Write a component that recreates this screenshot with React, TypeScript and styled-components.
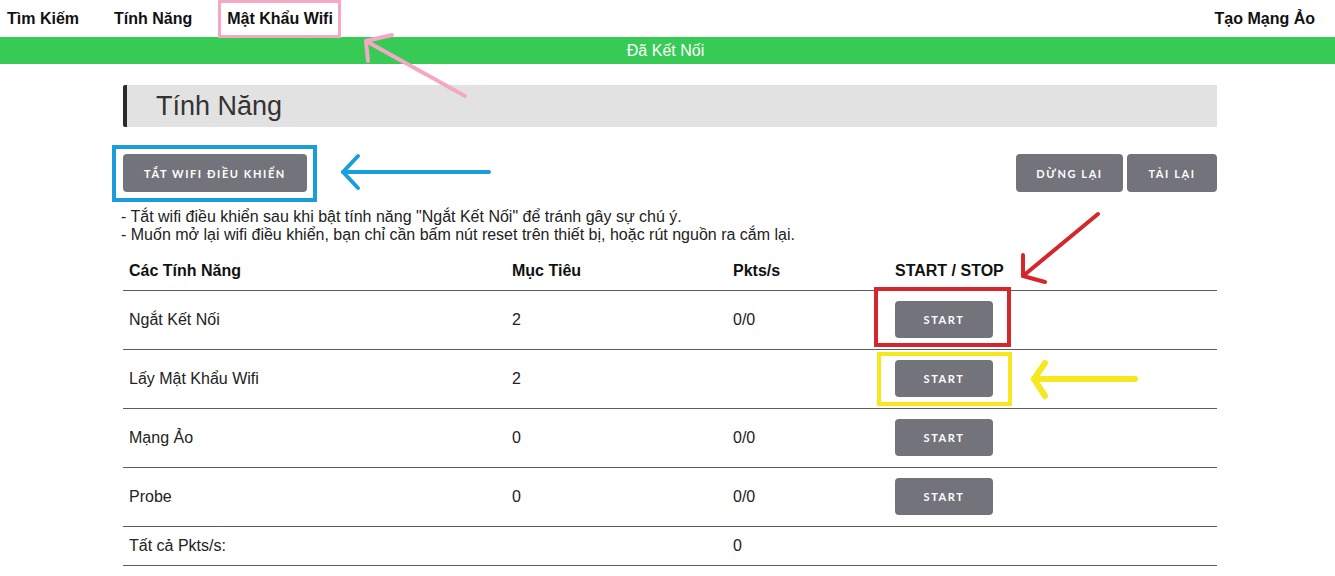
import React from "react";
import styled, { createGlobalStyle } from "styled-components";

const Global = createGlobalStyle`
  html, body { margin: 0; padding: 0; background: #fff; }
  body { font-family: "Liberation Sans", Arial, sans-serif; color: #222; }
`;

const Page = styled.div`
  position: relative;
  width: 1335px;
  min-height: 576px;
  overflow: hidden;
`;

const Nav = styled.nav`
  display: flex;
  align-items: center;
  height: 37px;
  padding: 0 20px 0 7px;
  gap: 35px;
`;

const NavLink = styled.a<{ $highlight?: boolean; $right?: boolean }>`
  position: relative;
  font-size: 16px;
  font-weight: 700;
  color: #111;
  text-decoration: none;
  margin-left: ${(p) => (p.$right ? "auto" : "0")};
  line-height: 37px;
  &::after {
    content: "";
    display: ${(p) => (p.$highlight ? "block" : "none")};
    position: absolute;
    top: 0;
    bottom: -1px;
    left: -9px;
    right: -8px;
    border: 3px solid #f4a8c5;
  }
`;

const StatusBar = styled.div`
  height: 27px;
  background: #37cb55;
  color: #fff;
  font-size: 16px;
  display: flex;
  align-items: center;
  justify-content: center;
  padding-right: 4px;
`;

const Content = styled.main`
  width: 1094px;
  margin-left: 123px;
  padding-top: 21px;
`;

const SectionTitle = styled.h2`
  margin: 0;
  height: 42px;
  background: #e2e2e2;
  border-left: 4px solid #2b2b2b;
  border-radius: 2px 0 0 2px;
  display: flex;
  align-items: center;
  padding-left: 29px;
  font-weight: 400;
  font-size: 27px;
  color: #333;
  font-family: "Liberation Sans", Arial, sans-serif;
`;

const Toolbar = styled.div`
  display: flex;
  align-items: center;
  margin-top: 27px;
  gap: 4px;
`;

const Spacer = styled.div`
  flex: 1;
`;

const Button = styled.button<{ $w: number; $h?: number; $box?: string }>`
  position: relative;
  width: ${(p) => p.$w}px;
  height: ${(p) => p.$h ?? 38}px;
  border: none;
  border-radius: 4px;
  background: #72737b;
  color: #fff;
  font-family: Lato, "Open Sans", sans-serif;
  font-weight: 700;
  font-size: 11px;
  letter-spacing: 1.6px;
  padding: 0;
  cursor: pointer;
  &::after {
    content: "";
    display: ${(p) => (p.$box ? "block" : "none")};
    position: absolute;
    border: 4px solid ${(p) => p.$box ?? "transparent"};
    pointer-events: none;
  }
`;

const BlueBoxButton = styled(Button)`
  &::after {
    top: -9px;
    bottom: -10px;
    left: -11px;
    right: -10px;
  }
`;

const RedBoxButton = styled(Button)`
  &::after {
    top: -14px;
    bottom: -9px;
    left: -21px;
    right: -18px;
  }
`;

const YellowBoxButton = styled(Button)`
  &::after {
    top: -8px;
    bottom: -9px;
    left: -18px;
    right: -19px;
  }
`;

const Notes = styled.div`
  margin-top: 16px;
  margin-left: -2px;
  font-size: 16px;
  line-height: 18px;
  color: #222;
`;

const Table = styled.table`
  width: 100%;
  margin-top: 9px;
  border-collapse: collapse;
  table-layout: fixed;
  font-size: 16px;
  color: #222;
`;

const Th = styled.th<{ $w?: number }>`
  text-align: left;
  font-weight: 700;
  height: 37px;
  padding: 0 6px;
  border-bottom: 1px solid #5c5c5c;
  width: ${(p) => (p.$w ? `${p.$w}px` : "auto")};
  box-sizing: border-box;
  color: #111;
  vertical-align: middle;
`;

const Td = styled.td<{ $tall?: boolean }>`
  height: ${(p) => (p.$tall ? 58 : 38)}px;
  padding: 0 6px;
  border-bottom: 1px solid #5c5c5c;
  vertical-align: middle;
`;

const StartCell = styled(Td)`
  padding-left: 6px;
`;

const Overlay = styled.svg`
  position: absolute;
  left: 0;
  top: 0;
  width: 1335px;
  height: 576px;
  pointer-events: none;
`;

type Row = {
  name: string;
  target: string;
  pkts: string;
  box?: "red" | "yellow";
};

const rows: Row[] = [
  { name: "Ngắt Kết Nối", target: "2", pkts: "0/0", box: "red" },
  { name: "Lấy Mật Khẩu Wifi", target: "2", pkts: "", box: "yellow" },
  { name: "Mạng Ảo", target: "0", pkts: "0/0" },
  { name: "Probe", target: "0", pkts: "0/0" },
];

const StartButton: React.FC<{ box?: "red" | "yellow" }> = ({ box }) => {
  if (box === "red")
    return (
      <RedBoxButton $w={98} $h={37} $box="#d5262c">
        START
      </RedBoxButton>
    );
  if (box === "yellow")
    return (
      <YellowBoxButton $w={98} $h={37} $box="#f6e81f">
        START
      </YellowBoxButton>
    );
  return (
    <Button $w={98} $h={37}>
      START
    </Button>
  );
};

export default function App() {
  return (
    <Page>
      <Global />
      <Nav>
        <NavLink>Tìm Kiếm</NavLink>
        <NavLink>Tính Năng</NavLink>
        <NavLink $highlight>Mật Khẩu Wifi</NavLink>
        <NavLink $right>Tạo Mạng Ảo</NavLink>
      </Nav>
      <StatusBar>Đã Kết Nối</StatusBar>
      <Content>
        <SectionTitle>Tính Năng</SectionTitle>
        <Toolbar>
          <BlueBoxButton $w={184} $box="#1a9edb">
            TẮT WIFI ĐIỀU KHIỂN
          </BlueBoxButton>
          <Spacer />
          <Button $w={107}>DỪNG LẠI</Button>
          <Button $w={90}>TẢI LẠI</Button>
        </Toolbar>
        <Notes>
          - Tắt wifi điều khiển sau khi bật tính năng "Ngắt Kết Nối" để tránh gây sự chú ý.
          <br />- Muốn mở lại wifi điều khiển, bạn chỉ cần bấm nút reset trên thiết bị, hoặc rút nguồn ra cắm lại.
        </Notes>
        <Table>
          <thead>
            <tr>
              <Th $w={383}>Các Tính Năng</Th>
              <Th $w={221}>Mục Tiêu</Th>
              <Th $w={162}>Pkts/s</Th>
              <Th>START / STOP</Th>
            </tr>
          </thead>
          <tbody>
            {rows.map((r) => (
              <tr key={r.name}>
                <Td $tall>{r.name}</Td>
                <Td $tall>{r.target}</Td>
                <Td $tall>{r.pkts}</Td>
                <StartCell $tall>
                  <StartButton box={r.box} />
                </StartCell>
              </tr>
            ))}
            <tr>
              <Td>Tất cả Pkts/s:</Td>
              <Td />
              <Td>0</Td>
              <Td />
            </tr>
          </tbody>
        </Table>
      </Content>
      <Overlay viewBox="0 0 1335 576">
        <g fill="none" strokeLinecap="round" strokeLinejoin="round">
          <g stroke="#f4a8c5" strokeWidth={4}>
            <path d="M465 96 L366 41" />
            <path d="M392 35 L366 41 L368 61" />
          </g>
          <g stroke="#1a9edb" strokeWidth={4}>
            <path d="M489 172 L343 172" />
            <path d="M358 156 L343 172 L358 188" />
          </g>
          <g stroke="#d5262c" strokeWidth={4}>
            <path d="M1098 214 L1023 276" />
            <path d="M1023 255 L1023 276 L1045 282" />
          </g>
          <g stroke="#f6e81f" strokeWidth={6}>
            <path d="M1135 379 L1034 379" />
            <path d="M1045 363 L1034 379 L1045 396" />
          </g>
        </g>
      </Overlay>
    </Page>
  );
}
